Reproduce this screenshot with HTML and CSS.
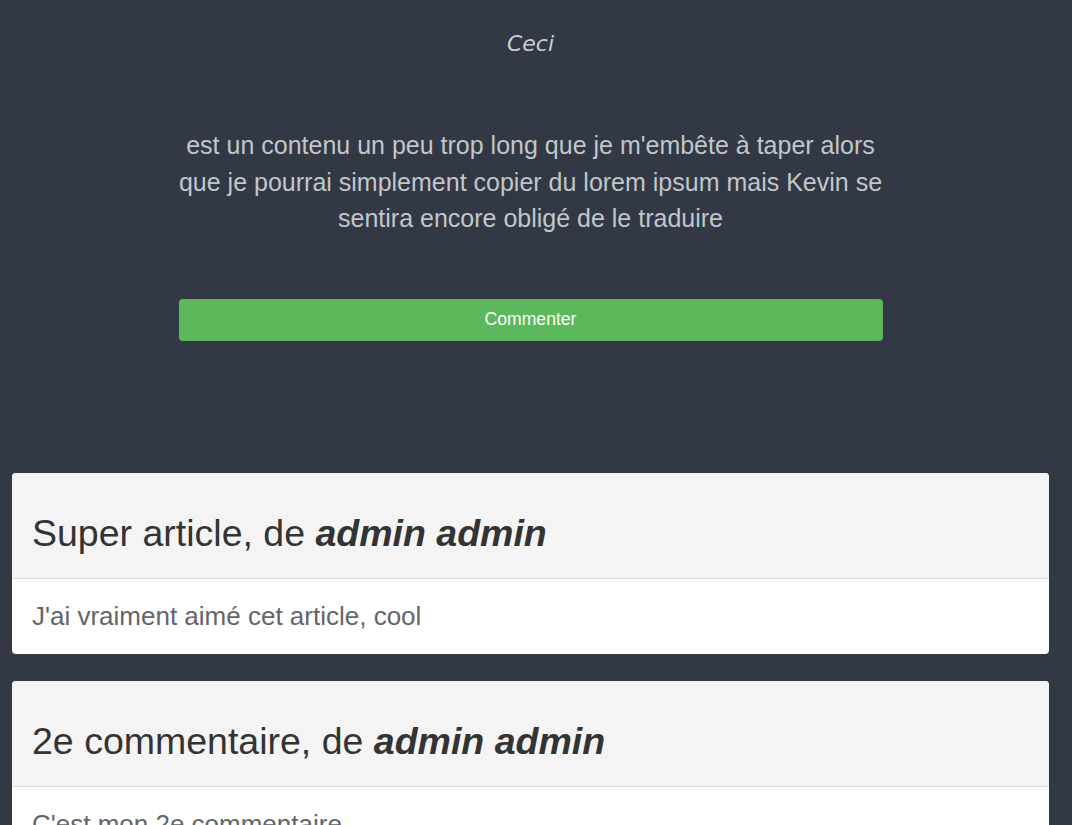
FILE: index.html
```html
<!DOCTYPE html>
<html lang="fr">
<head>
<meta charset="utf-8">
<title>Ceci</title>
<link rel="stylesheet" href="styles.css">
</head>
<body>
<div class="page">
  <section class="article">
    <h1 class="article-title">Ceci</h1>
    <p class="article-text">est un contenu un peu trop long que je m'embête à taper alors que je pourrai simplement copier du lorem ipsum mais Kevin se sentira encore obligé de le traduire</p>
    <button class="btn-comment">Commenter</button>
  </section>
  <section class="comments">
    <div class="card">
      <div class="card-header"><h2 class="card-title">Super article, de <em>admin admin</em></h2></div>
      <div class="card-body">J'ai vraiment aimé cet article, cool</div>
    </div>
    <div class="card">
      <div class="card-header"><h2 class="card-title">2e commentaire, de <em>admin admin</em></h2></div>
      <div class="card-body">C'est mon 2e commentaire</div>
    </div>
  </section>
</div>
</body>
</html>
```

FILE: styles.css
```css
html, body {
  margin: 0;
  padding: 0;
  background: #323944;
  height: 100%;
  overflow: hidden;
}
.page {
  width: 1037px;
  padding-left: 12px;
  font-family: "Liberation Sans", Arial, sans-serif;
}
.article {
  width: 704px;
  margin: 0 auto;
  padding-top: 30px;
  display: flex;
  flex-direction: column;
  align-items: center;
}
.article-title {
  margin: 0;
  font-family: "Comic Sans MS", "DejaVu Sans", sans-serif;
  font-style: italic;
  font-weight: normal;
  font-size: 22px;
  line-height: 28px;
  color: #c9ccd1;
}
.article-text {
  width: 714px;
  flex-shrink: 0;
  margin: 69px 0 0;
  font-size: 25px;
  line-height: 36.5px;
  color: #c2c6cb;
  text-align: center;
}
.btn-comment {
  margin-top: 62px;
  width: 704px;
  height: 42px;
  border: none;
  border-radius: 4px;
  background: #5cb85c;
  color: #fff;
  font-family: "Liberation Sans", Arial, sans-serif;
  font-size: 17.6px;
}
.comments {
  margin-top: 132px;
  display: flex;
  flex-direction: column;
  gap: 27px;
}
.card {
  background: #fff;
  border-radius: 4px;
  overflow: hidden;
}
.card-header {
  background: #f4f4f4;
  border-bottom: 1px solid #dddddd;
  padding: 40px 20px 25px;
}
.card-title {
  margin: 0;
  font-size: 37.5px;
  line-height: 40px;
  font-weight: normal;
  color: #333;
}
.card-title em {
  font-weight: bold;
}
.card-body {
  padding: 21px 20px;
  font-size: 26px;
  line-height: 33px;
  color: #636569;
}
```
